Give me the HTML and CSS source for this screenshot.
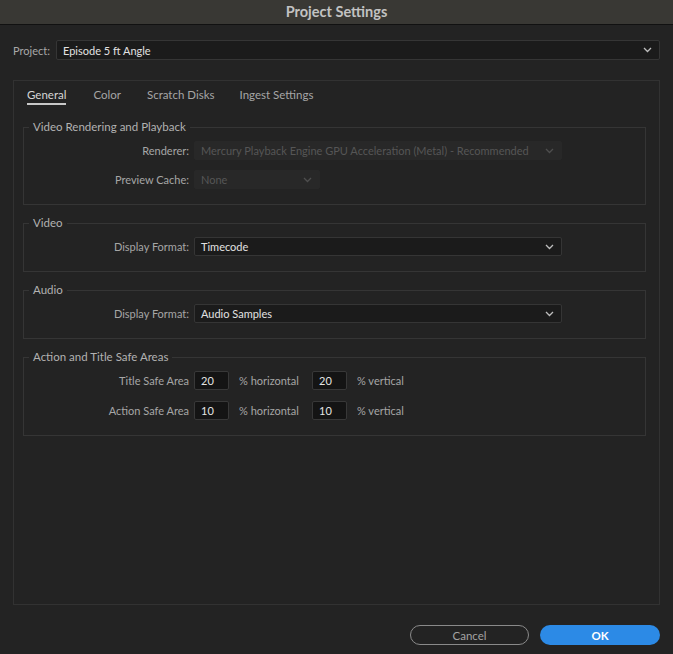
FILE: index.html
```html
<!DOCTYPE html>
<html>
<head>
<meta charset="utf-8">
<link rel="stylesheet" href="styles.css">
</head>
<body>
<div class="window">
  <div class="titlebar">Project Settings</div>
  <div class="content">
    <div class="project-row">
      <span class="project-label">Project:</span>
      <div class="select project-select">
        <span>Episode 5 ft Angle</span>
        <svg class="chev" width="9" height="6" viewBox="0 0 9 6"><polyline points="1,1 4.5,4.5 8,1" fill="none" stroke="#bdbdbd" stroke-width="1.3"/></svg>
      </div>
    </div>

    <div class="panel">
      <div class="tabs">
        <span class="tab active">General</span>
        <span class="tab">Color</span>
        <span class="tab">Scratch Disks</span>
        <span class="tab">Ingest Settings</span>
      </div>

      <fieldset class="group">
        <legend>Video Rendering and Playback</legend>
        <div class="rows">
          <div class="row">
            <span class="label">Renderer:</span>
            <div class="select disabled wide">
              <span>Mercury Playback Engine GPU Acceleration (Metal) - Recommended</span>
              <svg class="chev" width="9" height="6" viewBox="0 0 9 6"><polyline points="1,1 4.5,4.5 8,1" fill="none" stroke="#4e4e4e" stroke-width="1.3"/></svg>
            </div>
          </div>
          <div class="row">
            <span class="label">Preview Cache:</span>
            <div class="select disabled narrow">
              <span>None</span>
              <svg class="chev" width="9" height="6" viewBox="0 0 9 6"><polyline points="1,1 4.5,4.5 8,1" fill="none" stroke="#4e4e4e" stroke-width="1.3"/></svg>
            </div>
          </div>
        </div>
      </fieldset>

      <fieldset class="group">
        <legend>Video</legend>
        <div class="rows">
          <div class="row">
            <span class="label">Display Format:</span>
            <div class="select wide">
              <span>Timecode</span>
              <svg class="chev" width="9" height="6" viewBox="0 0 9 6"><polyline points="1,1 4.5,4.5 8,1" fill="none" stroke="#bdbdbd" stroke-width="1.3"/></svg>
            </div>
          </div>
        </div>
      </fieldset>

      <fieldset class="group">
        <legend>Audio</legend>
        <div class="rows">
          <div class="row">
            <span class="label">Display Format:</span>
            <div class="select wide">
              <span>Audio Samples</span>
              <svg class="chev" width="9" height="6" viewBox="0 0 9 6"><polyline points="1,1 4.5,4.5 8,1" fill="none" stroke="#bdbdbd" stroke-width="1.3"/></svg>
            </div>
          </div>
        </div>
      </fieldset>

      <fieldset class="group">
        <legend>Action and Title Safe Areas</legend>
        <div class="rows safe">
          <div class="row">
            <span class="label">Title Safe Area</span>
            <div class="inputs">
              <span class="num">20</span>
              <span class="unit">% horizontal</span>
              <span class="num">20</span>
              <span class="unit">% vertical</span>
            </div>
          </div>
          <div class="row">
            <span class="label">Action Safe Area</span>
            <div class="inputs">
              <span class="num">10</span>
              <span class="unit">% horizontal</span>
              <span class="num">10</span>
              <span class="unit">% vertical</span>
            </div>
          </div>
        </div>
      </fieldset>
    </div>

    <div class="buttons">
      <button class="btn cancel">Cancel</button>
      <button class="btn ok">OK</button>
    </div>
  </div>
</div>
</body>
</html>
```

FILE: styles.css
```css
* { box-sizing: border-box; }
html, body {
  margin: 0;
  padding: 0;
  background: #232323;
}
body {
  width: 673px;
  height: 654px;
  overflow: hidden;
  font-family: Lato, "Open Sans", sans-serif;
  font-size: 11px;
  color: #a8a8a8;
}
.window {
  display: flex;
  flex-direction: column;
  height: 654px;
}
.titlebar {
  height: 25px;
  background: #393834;
  border-bottom: 1px solid #111;
  color: #c2c2c2;
  font-weight: bold;
  font-size: 14.5px;
  line-height: 24px;
  text-align: center;
}
.content {
  padding: 15px 13px 0 13px;
  display: flex;
  flex-direction: column;
}
.project-row {
  display: flex;
  align-items: center;
  height: 20px;
}
.project-label {
  width: 43px;
  color: #a8a8a8;
}
.select {
  display: flex;
  align-items: center;
  justify-content: space-between;
  height: 19px;
  padding: 0 7px 0 6px;
  background: #1b1b1b;
  border: 1px solid #353535;
  border-radius: 2px;
  color: #e2e2e2;
}
.project-select {
  flex: 1;
  height: 20px;
}
.chev { flex: none; }
.panel {
  margin-top: 20px;
  height: 525px;
  border: 1px solid #323232;
  padding: 0 13px 0 9px;
  display: flex;
  flex-direction: column;
}
.tabs {
  display: flex;
  padding: 7px 0 0 4px;
  height: 24px;
}
.tab {
  line-height: 14px;
  height: 17px;
  margin-right: 27px;
  color: #a6a6a6;
  border-bottom: 2px solid transparent;
  font-size: 11.5px;
}
.tab:nth-child(2) { margin-right: 26px; }
.tab:nth-child(3) { margin-right: 25px; }
.tab.active {
  color: #d6d6d6;
  border-bottom-color: #c8c8c8;
}
.group {
  margin: 0;
  padding: 7px 0 15px 0;
  border: 1px solid #353535;
  min-width: 0;
}
.group + .group { margin-top: 11px; }
.tabs + .group { margin-top: 15px; }
.group legend {
  margin-left: 5px;
  padding: 0 4px;
  line-height: 14px;
  font-size: 11.5px;
  color: #b2b2b2;
}
.rows {
  display: flex;
  flex-direction: column;
  gap: 10px;
}
.rows.safe { gap: 11px; }
.row {
  display: grid;
  grid-template-columns: 165px auto;
  column-gap: 5px;
  align-items: center;
  justify-items: start;
}
.label {
  justify-self: end;
  color: #a6a6a6;
}
.select.wide { width: 368px; }
.select.narrow { width: 126px; }
.select.disabled {
  background: #282828;
  border-color: #282828;
  color: #565656;
}
.inputs {
  display: flex;
  align-items: center;
}
.num {
  width: 35px;
  height: 19px;
  line-height: 18px;
  padding-left: 6px;
  background: #141414;
  border: 1px solid #383838;
  border-radius: 2px;
  color: #e4e4e4;
}
.unit {
  margin: 0 10px 0 10px;
  color: #a6a6a6;
}
.inputs .unit:nth-child(2) { width: 63px; }
.buttons {
  display: flex;
  justify-content: flex-end;
  gap: 11px;
  margin-top: 20px;
}
.btn {
  height: 20px;
  border-radius: 10px;
  font-family: Lato, "Open Sans", sans-serif;
  font-size: 11.5px;
  padding: 0;
}
.cancel {
  width: 119px;
  background: transparent;
  border: 1.5px solid #8a8a8a;
  color: #a4a4a4;
}
.ok {
  width: 120px;
  background: #2c8ae6;
  border: none;
  color: #ffffff;
  font-weight: bold;
}
```
